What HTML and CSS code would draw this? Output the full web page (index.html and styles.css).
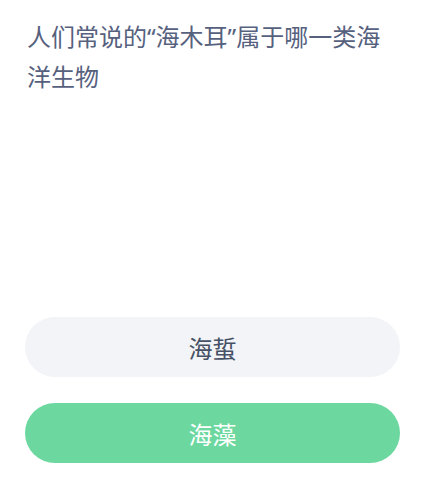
FILE: index.html
```html
<!DOCTYPE html>
<html lang="zh-CN">
<head>
    <meta charset="UTF-8">
    <meta name="viewport" content="width=device-width, initial-scale=1.0">
    <title>答题</title>
    <link rel="stylesheet" href="styles.css">
</head>
<body>
    <div class="quiz">
        <p class="question">人们常说的“海木耳”属于哪一类海洋生物</p>
        <div class="options">
            <button class="option">海蜇</button>
            <button class="option option-correct">海藻</button>
        </div>
    </div>
</body>
</html>
```

FILE: styles.css
```css
body {
    margin: 0;
    padding: 0;
    background-color: #fff;
    font-family: "Noto Sans", "Noto Sans CJK SC", sans-serif;
}
.quiz {
    height: 488px;
    display: flex;
    flex-direction: column;
    justify-content: space-between;
    padding: 17px 34px 25px 25px;
    box-sizing: border-box;
}
.question {
    margin: 0;
    padding-left: 2px;
    font-size: 24px;
    line-height: 40px;
    color: #56617e;
}
.options {
    display: flex;
    flex-direction: column;
    gap: 26px;
}
.option {
    height: 60px;
    border: none;
    border-radius: 30px;
    background-color: #f3f4f7;
    color: #465166;
    font-family: inherit;
    font-size: 24px;
    font-weight: 400;
}
.option-correct {
    background-color: #6cd89f;
    color: #fff;
}
```
